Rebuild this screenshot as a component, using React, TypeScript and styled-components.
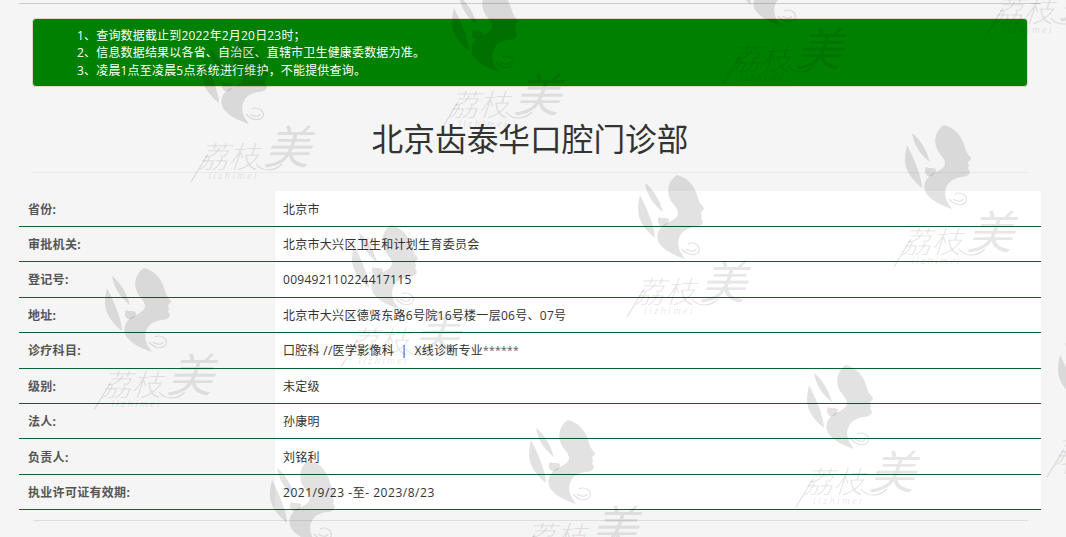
import React from "react";
import styled, { createGlobalStyle } from "styled-components";

const Global = createGlobalStyle`
  html, body { margin: 0; padding: 0; height: 100%; overflow: hidden; background: #f5f5f5; }
  #root { height: 100%; }
  * { box-sizing: border-box; }
`;

const FONT = `"Open Sans", "Noto Sans CJK SC", sans-serif`;

const Page = styled.div`
  position: relative;
  width: 1066px;
  height: 537px;
  overflow: hidden;
  padding: 3px 25px 0 19px;
  background: #f5f5f5;
  font-family: ${FONT};
  font-size: 12px;
  color: #333;
`;

const TopRule = styled.hr`
  margin: 0;
  border: 0;
  border-top: 1px solid #cccccc;
`;

const Content = styled.div`
  padding: 14px 13px 0 13px;
`;

const Notice = styled.div`
  height: 69px;
  padding: 7.5px 0 0 44px;
  background: #008000;
  border: 1px solid #e4d2cc;
  border-radius: 4px;
  color: #fff;
  line-height: 17.5px;
`;

const NoticeLine = styled.div`
  letter-spacing: 0.18px;
`;

const Title = styled.h1`
  margin: 0;
  height: 86px;
  padding-top: 30px;
  border-bottom: 1px solid #e9e9e9;
  text-align: center;
  font-size: 31.7px;
  line-height: 44px;
  font-weight: 400;
  color: #333;
`;

const Table = styled.div`
  display: grid;
  grid-template-columns: 256px 1fr;
  grid-auto-rows: 35.45px;
  margin-top: 18.4px;
`;

const Cell = styled.div`
  display: flex;
  align-items: center;
  padding-top: 1px;
  border-bottom: 1px solid #006633;
  line-height: 17px;
  white-space: pre;
`;

const Label = styled(Cell)`
  padding-left: 9px;
  font-weight: 700;
  color: #555;
  letter-spacing: 0.3px;
`;

const Value = styled(Cell)`
  padding-left: 8px;
  background: #fff;
  color: #333;
  letter-spacing: 0.28px;
`;

const Stars = styled.span`
  font-size: 10.4px;
  color: #555;
`;

const DateRange = styled.span`
  letter-spacing: 0.53px;
`;

const BottomRule = styled.hr`
  margin: 9.5px 13px 0 14px;
  border: 0;
  border-top: 1px solid #dedede;
`;

const Mark = styled.svg<{ $x: number; $y: number }>`
  position: absolute;
  left: ${(p) => p.$x}px;
  top: ${(p) => p.$y}px;
  width: 124px;
  height: 146px;
  pointer-events: none;
  overflow: visible;
`;

const INK = "rgba(0,0,0,0.115)";
const MARK_CJK = "'Noto Sans CJK SC', sans-serif";

function Watermark({ x, y }: { x: number; y: number }) {
  return (
    <Mark $x={x} $y={y} viewBox="0 0 124 146" aria-hidden="true">
      <g fill={INK}>
        <path d="M51 0C60 2 67 9 70 17C72 22 73 26 74 28L78 33C78 35 76 36 75 37L76 41L75 43L77 47C76 51 72 52 68 52C62 53 56 56 54 61C51 66 52 73 55 78L59 84C50 81 38 76 33 68C29 60 33 53 39 49C45 46 52 43 52 38C52 33 46 29 44 24C40 15 43 5 51 0Z" />
        <path d="M19 8C26 13 33 23 37 37C30 32 21 22 19 8Z" />
        <path d="M14 20C20 32 28 48 29 63C20 56 12 46 12 35C12 29 13 24 14 20Z" />
        <path d="M33 42C36 44 39 42 43 44C43 50 38 52 35 51C32 50 31 45 33 42Z" />
      </g>
      <g fill="none" stroke={INK} strokeWidth="1.2">
        <path d="M56 74C61 80 70 82 73 76C75 71 68 66 62 69" />
        <path d="M60 74C64 77 69 77 70 74" />
        <path d="M1 142L18 114" />
        <path d="M66 124C72 132 84 132 92 124" />
      </g>
      <g transform="translate(8 128) skewX(-18)">
        <text fontFamily={MARK_CJK} fontWeight="300" fontSize="30" fill={INK} x="0" y="0">荔枝</text>
        <text fontFamily={MARK_CJK} fontWeight="400" fontSize="46" fill={INK} x="64" y="-4">美</text>
      </g>
      <text fontFamily="'Liberation Serif', serif" fontStyle="italic" fontSize="11" letterSpacing="2" fill={INK} x="18" y="139">lizhimei</text>
    </Mark>
  );
}

const ROWS: [string, React.ReactNode][] = [
  ["省份:", "北京市"],
  ["审批机关:", "北京市大兴区卫生和计划生育委员会"],
  ["登记号:", "009492110224417115"],
  ["地址:", "北京市大兴区德贤东路6号院16号楼一层06号、07号"],
  ["诊疗科目:", <>口腔科 //医学影像科  |  X线诊断专业<Stars>******</Stars></>],
  ["级别:", "未定级"],
  ["法人:", "孙康明"],
  ["负责人:", "刘铭利"],
  ["执业许可证有效期:", <DateRange>2021/9/23 -至- 2023/8/23</DateRange>],
];

const MARKS: [number, number][] = [
  [190, 40], [440, -12], [722, -58], [985, -106],
  [893, 125], [626, 175], [93, 268], [340, 225],
  [517, 420], [795, 365], [1046, 335], [258, 460],
];

export default function App() {
  return (
    <Page>
      <Global />
      <TopRule />
      <Content>
        <Notice>
          <NoticeLine>1、查询数据截止到2022年2月20日23时；</NoticeLine>
          <NoticeLine>2、信息数据结果以各省、自治区、直辖市卫生健康委数据为准。</NoticeLine>
          <NoticeLine>3、凌晨1点至凌晨5点系统进行维护，不能提供查询。</NoticeLine>
        </Notice>
        <Title>北京齿泰华口腔门诊部</Title>
      </Content>
      <Table>
        {ROWS.map(([k, v]) => (
          <React.Fragment key={k}>
            <Label>{k}</Label>
            <Value>{v}</Value>
          </React.Fragment>
        ))}
      </Table>
      <BottomRule />
      {MARKS.map(([x, y]) => (
        <Watermark key={`${x}-${y}`} x={x} y={y} />
      ))}
    </Page>
  );
}
